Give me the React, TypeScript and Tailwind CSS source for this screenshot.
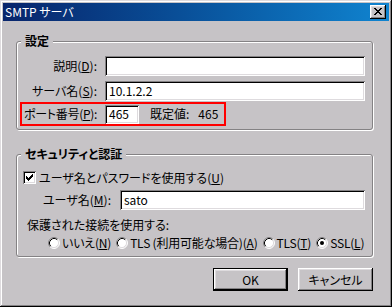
import React from "react";

const px = (cells: [number, number][]) =>
  cells.map(([x, y], i) => <rect key={i} x={x} y={y} width={1} height={1} />);

function CloseBtn() {
  const cells: [number, number][] = [];
  const rows = [
    "##....##",
    ".##..##.",
    "..####..",
    "...##...",
    "..####..",
    ".##..##.",
    "##....##",
  ];
  rows.forEach((r, y) =>
    r.split("").forEach((c, x) => {
      if (c === "#") cells.push([x + 4, y + 3]);
    })
  );
  return (
    <div className="w-[16px] h-[14px] bg-[#c6c3c6] shadow-[inset_-1px_-1px_0_#000,inset_1px_1px_0_#fff,inset_-2px_-2px_0_#848284,inset_2px_2px_0_#dedbde]">
      <svg width="16" height="14" shapeRendering="crispEdges" fill="#000">
        {px(cells)}
      </svg>
    </div>
  );
}

function Checkbox() {
  const rows = [
    "......#",
    ".....##",
    "#...###",
    "##.###.",
    "#####..",
    ".###...",
    "..#....",
  ];
  const cells: [number, number][] = [];
  rows.forEach((r, y) =>
    r.split("").forEach((c, x) => {
      if (c === "#") cells.push([x + 3, y + 3]);
    })
  );
  return (
    <div className="w-[13px] h-[13px] bg-white shrink-0 shadow-[inset_1px_1px_0_#848284,inset_-1px_-1px_0_#fff,inset_2px_2px_0_#000,inset_-2px_-2px_0_#dedbde]">
      <svg width="13" height="13" shapeRendering="crispEdges" fill="#000">
        {px(cells)}
      </svg>
    </div>
  );
}

function Radio({ checked }: { checked?: boolean }) {
  return (
    <svg width="12" height="12" className="shrink-0">
      <circle cx="6" cy="6" r="5" fill="#fff" />
      <path d="M2.11 9.89 A5.5 5.5 0 0 1 9.89 2.11" stroke="#848284" fill="none" />
      <path d="M9.89 2.11 A5.5 5.5 0 0 1 2.11 9.89" stroke="#fff" fill="none" />
      <path d="M2.82 9.18 A4.5 4.5 0 0 1 9.18 2.82" stroke="#000" fill="none" />
      <path d="M9.18 2.82 A4.5 4.5 0 0 1 2.82 9.18" stroke="#dedbde" fill="none" />
      {checked && <circle cx="6" cy="6" r="2" fill="#000" />}
    </svg>
  );
}

function Field({ className, value }: { className: string; value?: string }) {
  return (
    <div
      className={
        "bg-white pl-[4px] flex items-center shrink-0 shadow-[inset_1px_1px_0_#848284,inset_-1px_-1px_0_#fff,inset_2px_2px_0_#000,inset_-2px_-2px_0_#dedbde] " +
        className
      }
    >
      {value}
    </div>
  );
}

export default function App() {
  return (
    <div className="w-[392px] h-[307px] bg-[#c6c3c6] p-[3px] flex flex-col whitespace-nowrap text-[12px] leading-[14px] text-black font-['Noto_Sans_CJK_JP','Noto_Sans',sans-serif] [font-feature-settings:'palt'] shadow-[inset_-1px_-1px_0_#000,inset_1px_1px_0_#dedbde,inset_-2px_-2px_0_#848284,inset_2px_2px_0_#fff]">
      <div className="h-[18px] flex items-center justify-between bg-linear-to-r from-[#08246b] to-[#1084d0] pl-[2px] pr-[3px]">
        <span className="text-white">SMTP サーバ</span>
        <CloseBtn />
      </div>

      <fieldset className="mt-[13px] ml-[13px] w-[357px] rounded-[3px] border border-[#848284] shadow-[1px_1px_0_#fff,inset_1px_1px_0_#fff] pt-[8px] pb-[3px]">
        <legend className="ml-[4px] px-[4px] font-bold bg-[#c6c3c6]">設定</legend>
        <div className="flex items-center h-[20px]">
          <div className="w-[80px] shrink-0 text-right">
            説明(<u>D</u>):
          </div>
          <Field className="ml-[8px] w-[260px] h-[20px]" />
        </div>
        <div className="flex items-center h-[20px] mt-[5px]">
          <div className="w-[80px] shrink-0 text-right">
            サーバ名(<u>S</u>):
          </div>
          <Field className="ml-[8px] w-[260px] h-[20px]" value="10.1.2.2" />
        </div>
        <div className="ml-[3px] mt-[1px] w-[206px] h-[24px] border-2 border-[#ff0000] flex items-center">
          <div className="w-[75px] shrink-0 text-right tracking-[-0.3px]">
            ポート番号(<u>P</u>):
          </div>
          <Field className="ml-[8px] w-[34px] h-[19px]" value="465" />
          <span className="ml-[11px]">既定値:</span>
          <span className="ml-[9px]">465</span>
        </div>
      </fieldset>

      <fieldset className="mt-[17px] ml-[13px] w-[357px] rounded-[3px] border border-[#848284] shadow-[1px_1px_0_#fff,inset_1px_1px_0_#fff] pt-[10px] pb-[6px]">
        <legend className="ml-[4px] px-[4px] font-bold bg-[#c6c3c6]">セキュリティと認証</legend>
        <div className="flex items-center h-[13px] ml-[6px]">
          <Checkbox />
          <span className="ml-[3px]">
            ユーザ名とパスワードを使用する(<u>U</u>)
          </span>
        </div>
        <div className="flex items-center h-[20px] mt-[6px]">
          <div className="w-[94px] shrink-0 text-right">
            ユーザ名(<u>M</u>):
          </div>
          <Field className="ml-[9px] w-[245px] h-[20px]" value="sato" />
        </div>
        <div className="mt-[8px] pl-[10px]">保護された接続を使用する:</div>
        <div className="mt-[4px] pl-[31px] flex items-center h-[14px] tracking-[-0.2px]">
          <Radio />
          <span className="ml-[2px]">
            いいえ(<u>N</u>)
          </span>
          <span className="ml-[5px] flex">
            <Radio />
          </span>
          <span className="ml-[2px]">
            TLS (利用可能な場合)(<u>A</u>)
          </span>
          <span className="ml-[5px] flex">
            <Radio />
          </span>
          <span className="ml-[2px]">
            TLS(<u>T</u>)
          </span>
          <span className="ml-[5px] flex">
            <Radio checked />
          </span>
          <span className="ml-[2px]">
            SSL(<u>L</u>)
          </span>
        </div>
      </fieldset>

      <div className="mt-[11px] ml-[13px] w-[357px] flex justify-end gap-[10px]">
        <div className="w-[75px] h-[23px] border border-black">
          <div className="w-full h-full flex items-center justify-center shadow-[inset_-1px_-1px_0_#000,inset_1px_1px_0_#fff,inset_-2px_-2px_0_#848284,inset_2px_2px_0_#dedbde]">
            OK
          </div>
        </div>
        <div className="w-[75px] h-[23px] flex items-center justify-center shadow-[inset_-1px_-1px_0_#000,inset_1px_1px_0_#fff,inset_-2px_-2px_0_#848284,inset_2px_2px_0_#dedbde]">
          キャンセル
        </div>
      </div>
    </div>
  );
}
